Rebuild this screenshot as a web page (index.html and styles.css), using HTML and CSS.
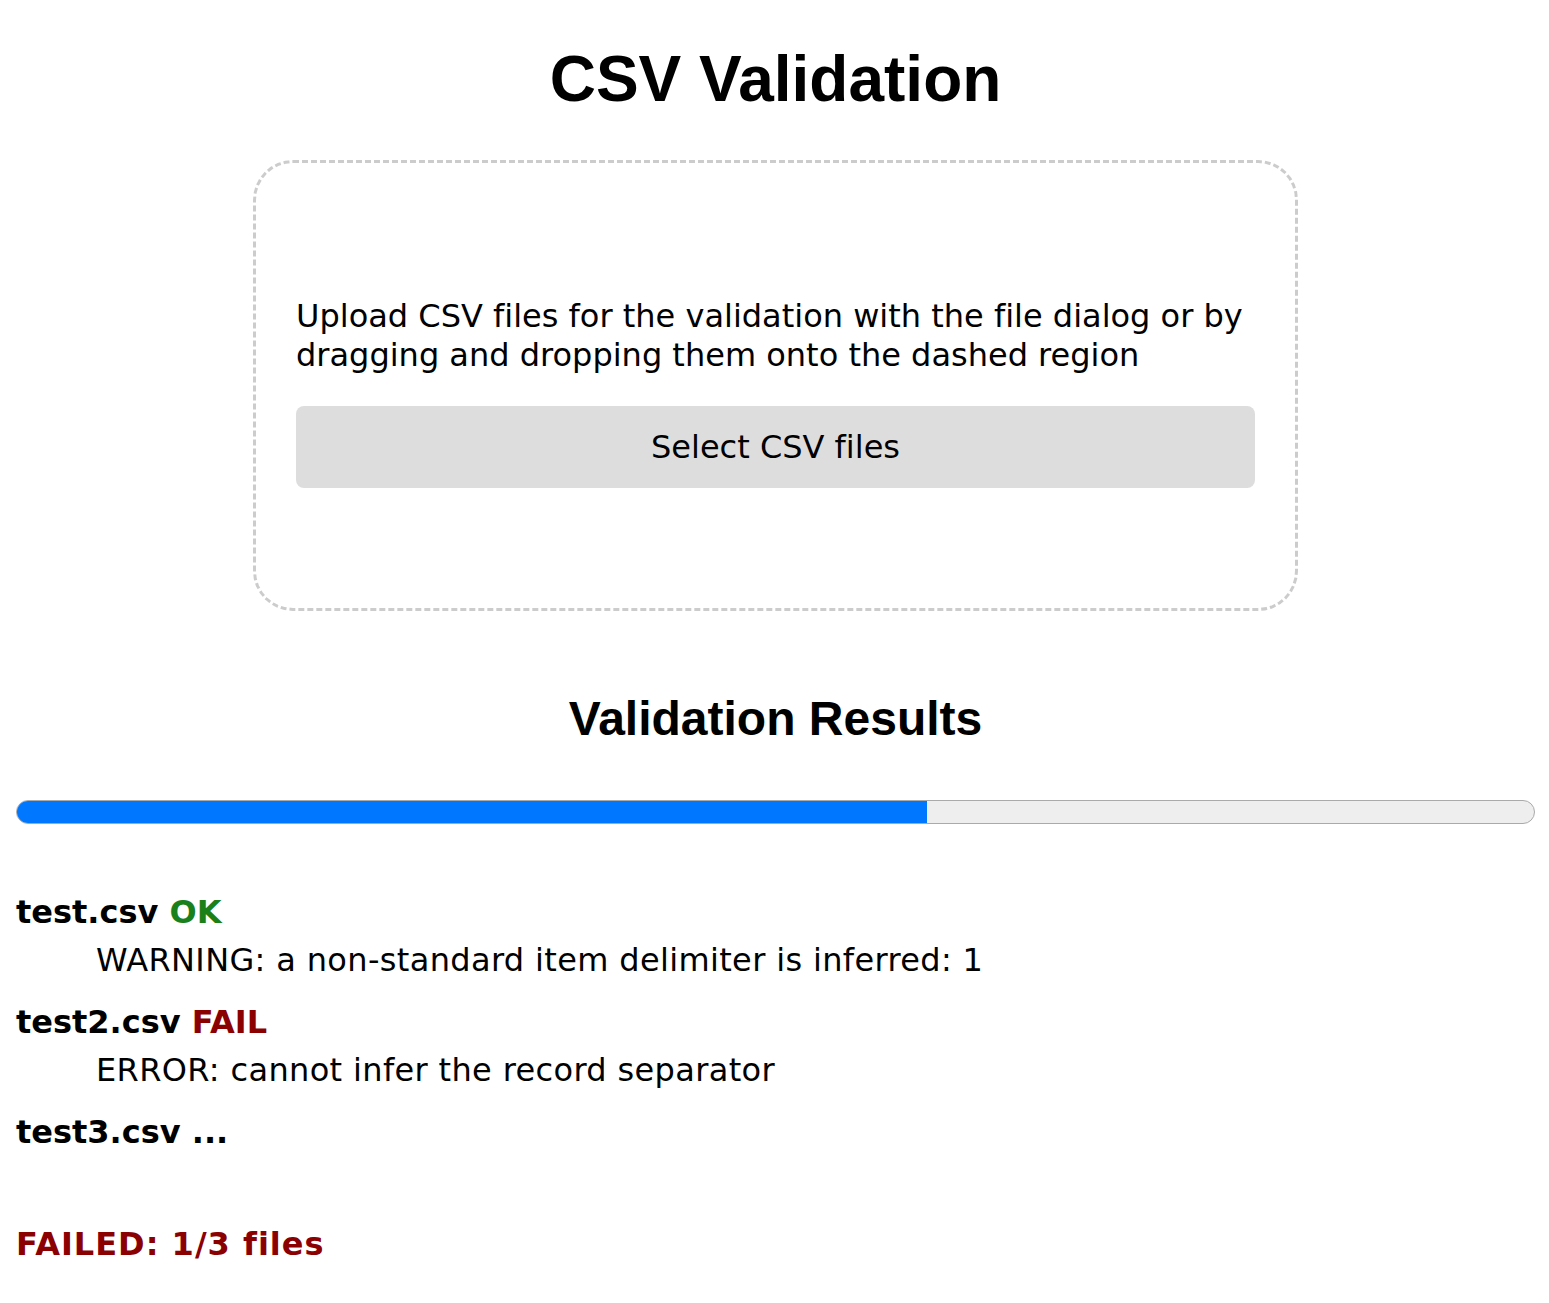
FILE: index.html
```html
<!DOCTYPE html>
<html>
<head>
<meta charset="utf-8">
<title>CSV Validation</title>
<link rel="stylesheet" href="styles.css">
</head>
<body>
<h1 class="title">CSV Validation</h1>
<div class="dropzone">
  <p class="intro">Upload CSV files for the validation with the file dialog or by dragging and dropping them onto the dashed region</p>
  <button class="select-btn">Select CSV files</button>
</div>
<h2 class="results-title">Validation Results</h2>
<div class="progress"><div class="progress-fill" style="width:60%"></div></div>
<div class="results">
  <div class="file">
    <div class="file-name">test.csv <span class="ok">OK</span></div>
    <div class="msg">WARNING: a non-standard item delimiter is inferred: 1</div>
  </div>
  <div class="file">
    <div class="file-name">test2.csv <span class="fail">FAIL</span></div>
    <div class="msg">ERROR: cannot infer the record separator</div>
  </div>
  <div class="file">
    <div class="file-name">test3.csv ...</div>
  </div>
</div>
<div class="summary">FAILED: 1/3 files</div>
</body>
</html>
```
FILE: styles.css
```css
html, body { margin: 0; padding: 0; background: #fff; }
body {
  padding: 0 14px 0 16px;
  font-family: "DejaVu Sans", Verdana, sans-serif;
  font-size: 32px;
  font-variant-ligatures: none;
  color: #000;
}
.title {
  font-family: "Liberation Sans", Arial, sans-serif;
  font-weight: bold;
  font-size: 64px;
  text-align: center;
  margin: 0;
  padding-top: 42px;
  line-height: 74px;
}
.dropzone {
  width: 1045px;
  box-sizing: border-box;
  margin: 44px auto 0;
  height: 451px;
  border: 3px dashed #ccc;
  border-radius: 40px;
  padding: 13px 40px 0;
  display: flex;
  flex-direction: column;
  justify-content: center;
}
.intro {
  margin: 0 0 31px;
  line-height: 39px;
}
.select-btn {
  display: block;
  width: 100%;
  height: 82px;
  border: none;
  border-radius: 8px;
  background: #ddd;
  font-family: "DejaVu Sans", Verdana, sans-serif;
  font-size: 32px;
  font-variant-ligatures: none;
  color: #000;
  padding: 0;
}
.results-title {
  font-family: "Liberation Sans", Arial, sans-serif;
  font-size: 48px;
  font-weight: bold;
  text-align: center;
  margin: 80px 0 0;
  line-height: 56px;
}
.progress {
  margin-top: 53px;
  height: 24px;
  box-sizing: border-box;
  background: #eee;
  border: 1px solid #aaa;
  border-radius: 12px;
  overflow: hidden;
  display: flex;
}
.progress-fill {
  background: #0077ff;
  height: 100%;
}
.results { margin-top: 68px; }
.file { margin-bottom: 22px; }
.file-name { font-weight: bold; line-height: 40px; }
.msg { padding-left: 80px; line-height: 40px; margin-top: 8px; letter-spacing: 0.35px; }
.ok { color: #1a801a; }
.fail { color: #8b0000; }
.summary {
  margin-top: 72px;
  font-weight: bold;
  color: #8b0000;
  line-height: 40px;
  letter-spacing: 1px;
}
```
